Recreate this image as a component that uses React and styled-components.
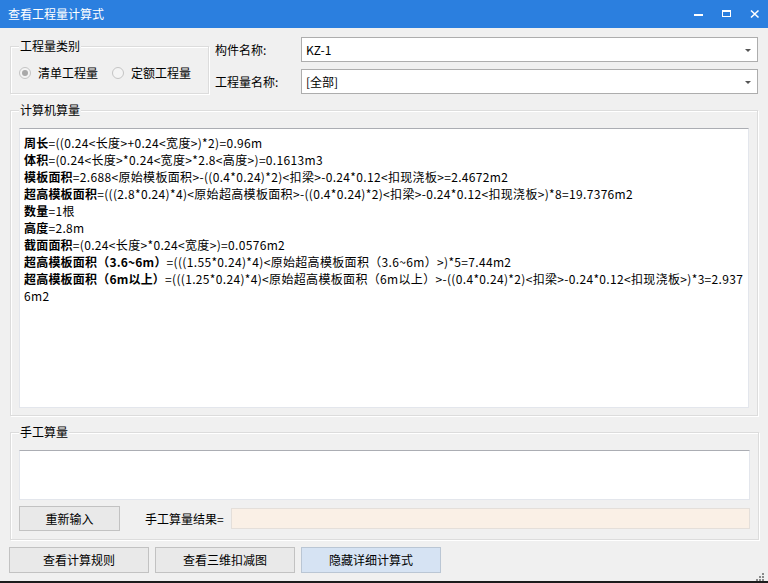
import styled, { createGlobalStyle } from 'styled-components';

const GlobalStyle = createGlobalStyle`
  html, body {
    margin: 0;
    padding: 0;
    background: #f0f0f0;
  }
  body {
    font-family: "Noto Sans CJK SC", "Liberation Sans", sans-serif;
    font-size: 12px;
    color: #000;
  }
`;

const lines = [
  ['周长', '=((0.24<长度>+0.24<宽度>)*2)=0.96m'],
  ['体积', '=(0.24<长度>*0.24<宽度>*2.8<高度>)=0.1613m3'],
  ['模板面积', '=2.688<原始模板面积>-((0.4*0.24)*2)<扣梁>-0.24*0.12<扣现浇板>=2.4672m2'],
  ['超高模板面积', '=(((2.8*0.24)*4)<原始超高模板面积>-((0.4*0.24)*2)<扣梁>-0.24*0.12<扣现浇板>)*8=19.7376m2'],
  ['数量', '=1根'],
  ['高度', '=2.8m'],
  ['截面面积', '=(0.24<长度>*0.24<宽度>)=0.0576m2'],
  ['超高模板面积（3.6~6m）', '=(((1.55*0.24)*4)<原始超高模板面积（3.6~6m）>)*5=7.44m2'],
  ['超高模板面积（6m以上）', '=(((1.25*0.24)*4)<原始超高模板面积（6m以上）>-((0.4*0.24)*2)<扣梁>-0.24*0.12<扣现浇板>)*3=2.937'],
  ['', '6m2'],
];

const App = () => {
  return (
    <Window>
      <GlobalStyle />
      <TitleBar>
        <Title>查看工程量计算式</Title>
        <Controls>
          <ControlButton>
            <svg width="10" height="10" viewBox="0 0 10 10" shapeRendering="crispEdges">
              <rect x="0" y="5" width="9" height="2" fill="#fff" />
            </svg>
          </ControlButton>
          <ControlButton>
            <svg width="10" height="10" viewBox="0 0 10 10" shapeRendering="crispEdges">
              <rect x="0.5" y="1.5" width="8" height="6" fill="none" stroke="#fff" strokeWidth="1" />
              <rect x="0" y="1" width="9" height="2" fill="#fff" />
            </svg>
          </ControlButton>
          <ControlButton>
            <svg width="10" height="10" viewBox="0 0 10 10">
              <path d="M1 1.5 L8.5 8.5 M8.5 1.5 L1 8.5" stroke="#fff" strokeWidth="1.6" />
            </svg>
          </ControlButton>
        </Controls>
      </TitleBar>

      <Body>
        <TopRow>
          <TypeGroup>
            <Legend>工程量类别</Legend>
            <RadioRow>
              <RadioItem>
                <Radio checked />
                <span>清单工程量</span>
              </RadioItem>
              <RadioItem>
                <Radio />
                <span>定额工程量</span>
              </RadioItem>
            </RadioRow>
          </TypeGroup>
          <Fields>
            <FieldRow>
              <FieldLabel>构件名称:</FieldLabel>
              <Combo>
                <span>KZ-1</span>
                <ComboArrow />
              </Combo>
            </FieldRow>
            <FieldRow>
              <FieldLabel>工程量名称:</FieldLabel>
              <Combo>
                <span>[全部]</span>
                <ComboArrow />
              </Combo>
            </FieldRow>
          </Fields>
        </TopRow>

        <Group>
          <Legend>计算机算量</Legend>
          <TextBox height={280}>
            {lines.map(([label, expr], i) => (
              <FormulaLine key={i}>
                {label && <b>{label}</b>}
                <Expr>{expr}</Expr>
              </FormulaLine>
            ))}
          </TextBox>
        </Group>

        <Group wide>
          <Legend>手工算量</Legend>
          <TextBox height={50} />
          <ManualRow>
            <Button width={101} height={25}>重新输入</Button>
            <ResultLabel>手工算量结果=</ResultLabel>
            <ResultField />
          </ManualRow>
        </Group>

        <ButtonRow>
          <Button width={140} height={26}>查看计算规则</Button>
          <Button width={140} height={26}>查看三维扣减图</Button>
          <Button width={140} height={26} primary>隐藏详细计算式</Button>
        </ButtonRow>
      </Body>

      <Footer>
        <Grip>
          <svg width="9" height="9" viewBox="0 0 9 9" shapeRendering="crispEdges">
            <rect x="6" y="0" width="2" height="2" fill="#8a8a8a" />
            <rect x="3" y="3" width="2" height="2" fill="#8a8a8a" />
            <rect x="6" y="3" width="2" height="2" fill="#8a8a8a" />
            <rect x="0" y="6" width="2" height="2" fill="#8a8a8a" />
            <rect x="3" y="6" width="2" height="2" fill="#8a8a8a" />
            <rect x="6" y="6" width="2" height="2" fill="#8a8a8a" />
          </svg>
        </Grip>
      </Footer>
    </Window>
  );
};

export default App;

const Window = styled.div`
  width: 768px;
  height: 583px;
  display: flex;
  flex-direction: column;
  background: #f0f0f0;
  overflow: hidden;
  border-bottom: 2px solid #1c1c1c;
  box-sizing: border-box;
`;

const TitleBar = styled.div`
  height: 28px;
  flex: none;
  background: #2b7fdf;
  display: flex;
  align-items: center;
  justify-content: space-between;
  padding-left: 8px;
`;

const Title = styled.span`
  color: #fff;
  font-size: 12px;
  line-height: 16px;
`;

const Controls = styled.div`
  display: flex;
  align-items: center;
  height: 100%;
  padding-right: 8px;
  gap: 18px;
`;

const ControlButton = styled.div`
  width: 10px;
  height: 10px;
  display: flex;
  align-items: center;
  justify-content: center;
  svg {
    display: block;
  }
`;

const Body = styled.div`
  flex: none;
  padding: 0 10px;
  display: flex;
  flex-direction: column;
`;

const TopRow = styled.div`
  height: 67px;
  display: flex;
  align-items: flex-start;
`;

const GroupBase = styled.fieldset`
  margin: 0;
  border: 1px solid #dcdcdc;
  box-shadow: inset 1px 1px 0 #fff, 1px 1px 0 #fff;
  min-inline-size: 0;
  box-sizing: border-box;
`;

const TypeGroup = styled(GroupBase)`
  width: 199px;
  margin-top: 10px;
  padding: 0 8px 12px 8px;
`;

const Legend = styled.legend`
  padding: 0 1px;
  font-size: 12px;
  line-height: 16px;
  background: #f0f0f0;
`;

const RadioRow = styled.div`
  margin-top: 11px;
  display: flex;
  gap: 14px;
  height: 16px;
  align-items: center;
`;

const RadioItem = styled.label`
  display: flex;
  align-items: center;
  gap: 7px;
  color: #000;
  line-height: 16px;
`;

const Radio = styled.span`
  width: 12px;
  height: 12px;
  border-radius: 50%;
  border: 1px solid #c4c4c4;
  box-sizing: border-box;
  background: #f4f4f4;
  display: flex;
  align-items: center;
  justify-content: center;
  &::after {
    content: '';
    width: 6px;
    height: 6px;
    border-radius: 50%;
    background: ${({ checked }) => (checked ? '#a9a9a9' : 'transparent')};
  }
`;

const Fields = styled.div`
  flex: 1;
  margin-left: 6px;
  padding-top: 9px;
  display: flex;
  flex-direction: column;
  gap: 7px;
`;

const FieldRow = styled.div`
  display: flex;
  align-items: center;
`;

const FieldLabel = styled.span`
  width: 86px;
  flex: none;
  line-height: 16px;
`;

const Combo = styled.div`
  flex: 1;
  height: 25px;
  box-sizing: border-box;
  border: 1px solid #adadad;
  background: #fff;
  display: flex;
  align-items: center;
  justify-content: space-between;
  padding: 0 6px 0 4px;
  line-height: 16px;
`;

const ComboArrow = styled.span`
  width: 0;
  height: 0;
  border-left: 3px solid transparent;
  border-right: 3px solid transparent;
  border-top: 3px solid #555;
  margin-top: 1px;
`;

const Group = styled(GroupBase)`
  width: ${({ wide }) => (wide ? '749px' : '748px')};
  margin-top: ${({ wide }) => (wide ? '8px' : '7px')};
  padding: 0 8px ${({ wide }) => (wide ? '8px' : '7px')} 8px;
`;

const TextBox = styled.div`
  margin-top: 10px;
  height: ${({ height }) => height}px;
  box-sizing: border-box;
  background: #fff;
  border: 1px solid #e3e6ec;
  border-top-color: #abadb3;
  padding: 5px 4px;
  overflow: hidden;
`;

const FormulaLine = styled.div`
  font-size: 12px;
  line-height: 17px;
  white-space: nowrap;
  b {
    font-weight: 700;
    letter-spacing: 0.2px;
  }
`;

const Expr = styled.span`
  letter-spacing: 0.33px;
`;

const ManualRow = styled.div`
  margin-top: 6px;
  display: flex;
  align-items: center;
`;

const Button = styled.div`
  width: ${({ width }) => width}px;
  height: ${({ height }) => height}px;
  box-sizing: border-box;
  flex: none;
  display: flex;
  align-items: center;
  justify-content: center;
  background: ${({ primary }) => (primary ? '#d6e3f3' : '#e9e9e9')};
  border: 1px solid ${({ primary }) => (primary ? '#bac6d4' : '#c2c2c2')};
  line-height: 16px;
`;

const ResultLabel = styled.span`
  margin-left: 25px;
  width: 86px;
  flex: none;
  line-height: 16px;
`;

const ResultField = styled.div`
  flex: 1;
  height: 21px;
  box-sizing: border-box;
  background: #faf0e6;
  border: 1px solid #e4dfda;
`;

const ButtonRow = styled.div`
  margin-top: 7px;
  margin-left: -1px;
  display: flex;
  gap: 6px;
`;

const Footer = styled.div`
  flex: 1;
  display: flex;
  justify-content: flex-end;
  align-items: flex-end;
  padding: 0 3px 2px 0;
`;

const Grip = styled.div`
  svg {
    display: block;
  }
`;
